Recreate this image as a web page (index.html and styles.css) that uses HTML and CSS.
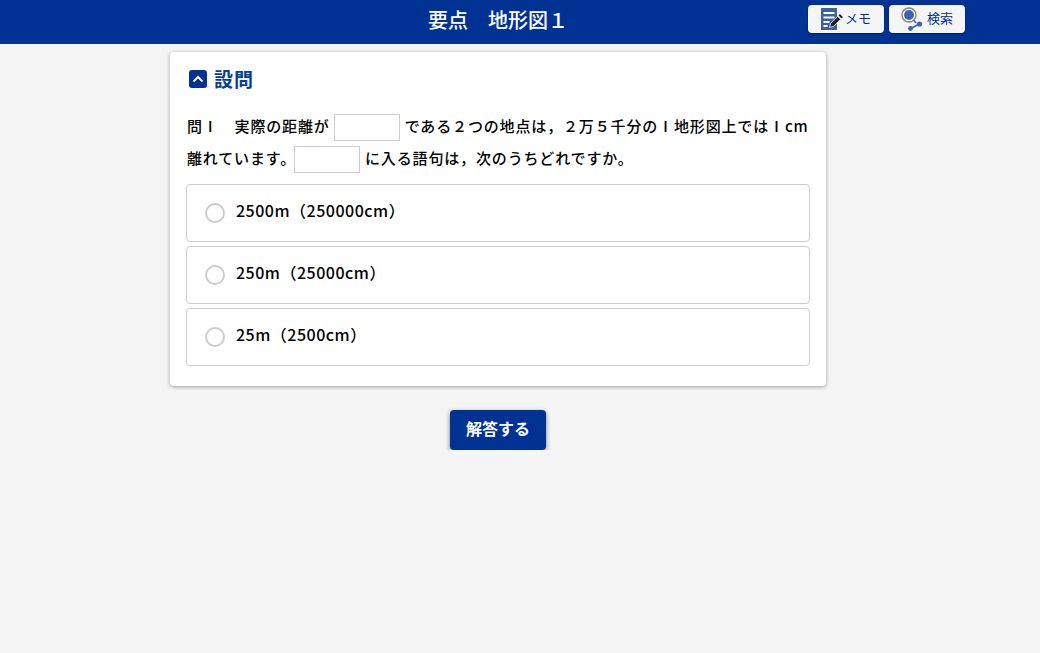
FILE: index.html
```html
<!DOCTYPE html>
<html lang="ja">

<head>
  <meta charset="UTF-8">
  <meta name="viewport" content="width=device-width, initial-scale=1.0">
  <title>要点 地形図1</title>
  <link rel="stylesheet" href="styles.css">
</head>

<body>
  <header class="top-bar">
    <h1 class="top-title">要点　地形図１</h1>
    <div class="top-buttons">
      <button class="tool-btn tool-memo" type="button">
        <svg class="tool-icon" width="24" height="24" viewBox="0 0 24 24">
          <rect x="1" y="1" width="16" height="22" fill="#3f5fa5" />
          <path d="M3.5 6h11M3.5 10.5h11M3.5 15h6M3.5 19h4" stroke="#fff" stroke-width="2" fill="none" />
          <path d="M9.5 20.5l1.2-4.2 7-7 3 3-7 7z" fill="#222" stroke="#fff" stroke-width=".8" />
          <path d="M18.5 8.5l1.4-1.4 3 3-1.4 1.4z" fill="#222" />
        </svg>
        <span>メモ</span>
      </button>
      <button class="tool-btn tool-search" type="button">
        <svg class="tool-icon" width="22" height="24" viewBox="0 0 22 24">
          <circle cx="8" cy="8" r="7" fill="#fff" stroke="#8a8078" stroke-width="1.4" />
          <circle cx="8" cy="8" r="5" fill="#3f64ac" />
          <path d="M13 13.5l2 2.5M18 17l-8 4.5" stroke="#3f64ac" stroke-width="1.6" fill="none" />
          <circle cx="18.5" cy="17" r="2.6" fill="#3f64ac" />
          <circle cx="9.5" cy="21.5" r="2.4" fill="#3f64ac" />
        </svg>
        <span>検索</span>
      </button>
    </div>
  </header>

  <main class="content">
    <section class="card">
      <div class="card-title">
        <span class="toggle">
          <svg width="12" height="8" viewBox="0 0 12 8">
            <path d="M1.5 6.5L6 2l4.5 4.5" stroke="#fff" stroke-width="2" fill="none" />
          </svg>
        </span>
        <h2>設問</h2>
      </div>
      <p class="question">問Ⅰ　実際の距離が<span class="blank"></span>である２つの地点は，２万５千分のⅠ地形図上ではⅠcm<br>離れています。<span class="blank blank-tight"></span>に入る語句は，次のうちどれですか。</p>
      <div class="choices">
        <label class="choice"><span class="radio"></span><span>2500m（250000cm）</span></label>
        <label class="choice"><span class="radio"></span><span>250m（25000cm）</span></label>
        <label class="choice"><span class="radio"></span><span>25m（2500cm）</span></label>
      </div>
    </section>
    <button class="answer-btn" type="button">解答する</button>
  </main>
</body>

</html>
```
FILE: styles.css
```css
body {
  margin: 0;
  background-color: #f5f5f5;
  font-family: "Noto Sans CJK JP", "Noto Sans", sans-serif;
  color: #000;
}

.top-bar {
  height: 44px;
  background-color: #003293;
  display: flex;
  align-items: center;
  justify-content: space-between;
  padding: 0 75px 0 428px;
}

.top-title {
  margin: 0 0 4px;
  width: 138px;
  font-size: 20px;
  font-weight: 500;
  line-height: 40px;
  white-space: nowrap;
  color: #fff;
}

.top-buttons {
  display: flex;
  gap: 5px;
  margin-bottom: 6px;
}

.tool-btn {
  width: 76px;
  height: 28px;
  padding: 0;
  border: 0;
  border-radius: 4px;
  background-color: #f5f5f5;
  box-shadow: 0 1px 2px rgba(0, 0, 0, 0.4);
  display: flex;
  align-items: center;
  font-family: inherit;
  font-size: 13px;
  color: #003293;
}

.tool-btn span {
  margin-bottom: 3px;
}

.tool-memo {
  padding-left: 12px;
  gap: 1px;
}

.tool-search {
  padding-left: 12px;
  gap: 4px;
}

.tool-icon {
  flex-shrink: 0;
}

.content {
  width: 656px;
  margin-left: 170px;
  padding-top: 8px;
  display: flex;
  flex-direction: column;
  align-items: center;
}

.card {
  width: 100%;
  box-sizing: border-box;
  height: 334px;
  padding: 15px 16px 16px;
  background-color: #fff;
  border-radius: 4px;
  box-shadow: 0 1px 4px rgba(0, 0, 0, 0.35);
}

.card-title {
  display: flex;
  align-items: center;
  gap: 7px;
  height: 24px;
  padding-left: 3px;
}

.card-title h2 {
  margin: -2px 0 0;
  font-size: 19px;
  font-weight: 700;
  letter-spacing: 1px;
  color: #00409a;
}

.toggle {
  width: 18px;
  height: 18px;
  border-radius: 3px;
  background-color: #003293;
  display: flex;
  align-items: center;
  justify-content: center;
}

.question {
  margin: 19px 0 10px;
  padding-left: 1px;
  font-size: 15px;
  font-weight: 500;
  line-height: 32px;
  letter-spacing: 0.85px;
  white-space: nowrap;
}

.blank {
  display: inline-block;
  box-sizing: border-box;
  width: 66px;
  height: 27px;
  margin: 0 5px 0 4px;
  border: 1px solid #ccc;
  vertical-align: middle;
}

.blank-tight {
  margin-left: -2px;
}

.choices {
  display: flex;
  flex-direction: column;
  gap: 4px;
}

.choice {
  height: 58px;
  box-sizing: border-box;
  border: 1px solid #ccc;
  border-radius: 4px;
  padding: 0 18px;
  display: flex;
  align-items: center;
  gap: 11px;
  font-size: 16px;
  font-weight: 500;
  letter-spacing: 0.5px;
}

.choice span:last-child {
  margin-bottom: 6px;
}

.radio {
  width: 20px;
  height: 20px;
  box-sizing: border-box;
  border: 2px solid #ccc;
  border-radius: 50%;
}

.answer-btn {
  width: 96px;
  height: 40px;
  margin-top: 24px;
  padding: 0 0 4px;
  border: 0;
  border-radius: 4px;
  background-color: #003293;
  box-shadow: 0 2px 5px rgba(0, 0, 0, 0.5);
  font-family: inherit;
  font-size: 16px;
  font-weight: 700;
  color: #fff;
}
```
